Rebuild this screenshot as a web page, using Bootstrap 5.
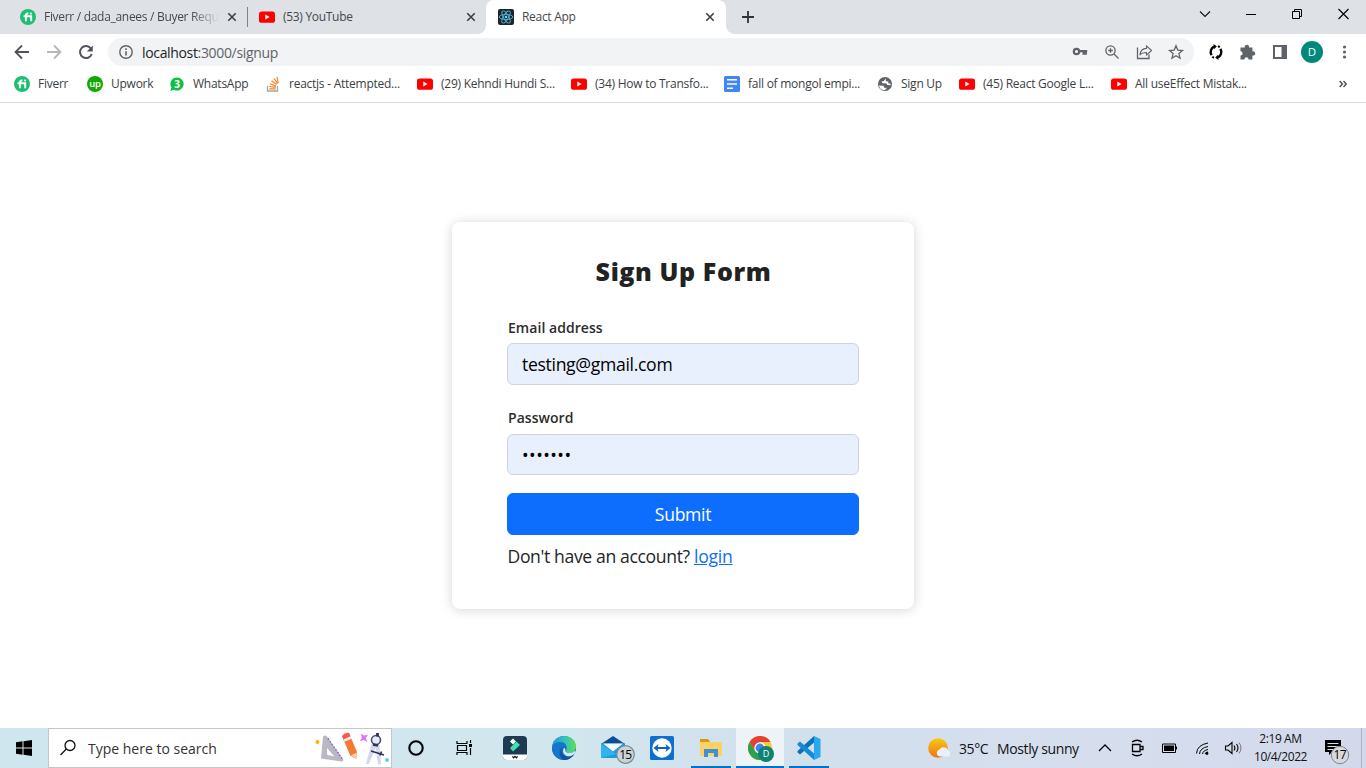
<!DOCTYPE html>
<html lang="en">
<head>
<meta charset="utf-8">
<title>React App</title>
<link rel="stylesheet" href="https://cdn.jsdelivr.net/npm/bootstrap@5.3.0/dist/css/bootstrap.min.css">
<style>
  html, body { height: 100%; }
  body { font-family: "Open Sans", "Noto Sans", sans-serif; overflow: hidden; color: #212529; background: #fff; }
  svg { display: block; flex: none; }
  svg text { font-family: "Open Sans", "Noto Sans", sans-serif; }
  .tabstrip { height: 34px; background: #dee1e6; font-size: 12px; letter-spacing: -.3px; color: #45494d; }
  .tab { height: 34px; }
  .tab-title { white-space: nowrap; }
  .tab-fade { -webkit-mask-image: linear-gradient(90deg, #000 84%, transparent); mask-image: linear-gradient(90deg, #000 84%, transparent); }
  .tab-on { background: #fff; border-radius: 8px 8px 0 0; position: relative; }
  .tab-on::before, .tab-on::after { content: ""; position: absolute; bottom: 0; width: 8px; height: 8px; }
  .tab-on::before { left: -8px; background: radial-gradient(circle at 0 0, transparent 7.5px, #fff 8px); }
  .tab-on::after { right: -8px; background: radial-gradient(circle at 100% 0, transparent 7.5px, #fff 8px); }
  .tab-rule { width: 1px; height: 20px; background: #808387; }
  .toolbar { height: 36px; }
  .omnibox { height: 28px; width: 1086px; border-radius: 14px; background: #f1f3f4; font-size: 14px; letter-spacing: -.34px; color: #5f6368; }
  .bookmarks { height: 33px; border-bottom: 1px solid #d9dadb; font-size: 12px; letter-spacing: -.25px; color: #3c4043; padding-left: 14px; }
  .bm { white-space: nowrap; gap: 8px; height: 27px; }
  .viewport { height: 625px; padding-top: 119px; }
  .signup { width: 462px; height: 387px; border-radius: 8px; padding: 33px 55px 0; background: #fff; box-shadow: 0 1px 12px rgba(0,0,0,.17); font-size: 17.6px; }
  .signup h1 { font-size: 25px; font-weight: 800; line-height: 32px; letter-spacing: .6px; margin: 0 0 32px; padding-left: 1px; color: #222; }
  .signup .form-label { font-size: 14px; font-weight: 600; line-height: 18px; letter-spacing: .05px; margin-bottom: 6px; padding-left: 1px; display: block; color: #2c2c2c; }
  .signup .form-control { height: 42px; background: #e8f0fe; border-color: #ced4da; border-radius: 6px; color: #000; font-size: 17.6px; letter-spacing: -.32px; padding: 6px 14px; }
  .signup .form-control[type=password] { height: 41px; letter-spacing: .45px; }
  .signup .btn { height: 42px; background: #0d6efd; font-size: 17.6px; letter-spacing: -.3px; border-radius: 6px; }
  .ask { letter-spacing: -.37px; padding-left: .5px; }
  .ask a { letter-spacing: -.25px; }
  .taskbar { height: 40px; background: linear-gradient(90deg, #d0e6ee 0%, #d2e6ee 42%, #d2dfec 62%, #d6deee 80%, #d3d9eb 100%); color: #111; }
  .searchbox { width: 344px; height: 40px; background: #fff; border: 1px solid #c4c7c9; font-size: 14px; color: #333; }
  .app { width: 49px; height: 40px; border-bottom: 2px solid transparent; }
  .app-open { width: 40px; margin: 0 4.5px; border-color: #0073cf; }
  .app-focus { width: 48px; margin: 0 .5px; border-color: #0073cf; background: #edf3f7; }
  .tray { font-size: 14px; letter-spacing: -.38px; white-space: nowrap; }
  .clock { width: 63px; font-size: 12px; line-height: 18px; letter-spacing: -.42px; }
</style>
<script src="https://cdn.jsdelivr.net/npm/bootstrap@5.3.0/dist/js/bootstrap.bundle.min.js"></script>
</head>
<body class="d-flex flex-column">

<svg width="0" height="0" class="position-absolute">
  <defs>
    <symbol id="yt" viewBox="0 0 16 16"><rect y="2.4" width="16" height="11.4" rx="2.6" fill="#f00"/><path d="M6.3 5.6 10.6 8.1 6.3 10.6z" fill="#fff"/></symbol>
    <symbol id="fv" viewBox="0 0 16 16"><circle cx="8" cy="8" r="8" fill="#1dbf73"/><path d="M3.600 7.200h7.600v5M5.900 12.200V6.300q0-2 2.600-1.800" fill="none" stroke="#fff" stroke-width="1.900"/><circle cx="11" cy="4.500" r="1.100" fill="#fff"/></symbol>
    <symbol id="cross" viewBox="0 0 10 10"><path d="M1.300 1.300 8.700 8.700M8.700 1.300 1.300 8.700" stroke="#3c4043" stroke-width="1.600"/></symbol>
  </defs>
</svg>

<!-- tab strip -->
<header class="tabstrip d-flex align-items-center flex-shrink-0">
  <div class="tab d-flex align-items-center" style="width:247px;padding-left:20px">
    <svg width="16" height="16"><use href="#fv"/></svg>
    <div class="tab-title tab-fade" style="width:175px;margin-left:8px">Fiverr / dada_anees / Buyer Requ</div>
    <svg width="10" height="10" style="margin-left:8px"><use href="#cross"/></svg>
  </div>
  <div class="tab-rule"></div>
  <div class="tab d-flex align-items-center" style="width:238px;padding-left:11px">
    <svg width="16" height="16"><use href="#yt"/></svg>
    <div class="tab-title" style="width:175px;margin-left:8px">(53) YouTube</div>
    <svg width="10" height="10" style="margin-left:8px"><use href="#cross"/></svg>
  </div>
  <div class="tab tab-on d-flex align-items-center" style="width:240px;padding-left:12px">
    <svg width="16" height="16" viewBox="0 0 16 16"><rect width="16" height="16" rx="2" fill="#20232a"/><g fill="none" stroke="#52b7d2" stroke-width=".9"><ellipse cx="8" cy="8" rx="6.800" ry="2.600"/><ellipse cx="8" cy="8" rx="6.800" ry="2.600" transform="rotate(60 8 8)"/><ellipse cx="8" cy="8" rx="6.800" ry="2.600" transform="rotate(120 8 8)"/></g><circle cx="8" cy="8" r="1.300" fill="#61dafb"/></svg>
    <div class="tab-title" style="width:175px;margin-left:8px">React App</div>
    <svg width="10" height="10" style="margin-left:8px"><use href="#cross"/></svg>
  </div>
  <svg width="12" height="12" viewBox="0 0 12 12" style="margin-left:16px"><path d="M6 0v12M0 6h12" stroke="#303236" stroke-width="1.800"/></svg>
  <div class="ms-auto d-flex" style="padding-bottom:6px;padding-right:17px">
    <svg width="12" height="12" viewBox="0 0 12 12" style="margin-right:35px"><path d="m1 3.500 5 5 5-5" fill="none" stroke="#111" stroke-width="1.100"/></svg>
    <svg width="10" height="12" viewBox="0 0 10 12" style="margin-right:36px"><path d="M0 6.500h10" stroke="#000"/></svg>
    <svg width="11" height="12" viewBox="0 0 11 12" style="margin-right:35px"><path d="M.5 3.500h7v7h-7zM2.500 3.500v-2h7v7h-2" fill="none" stroke="#000"/></svg>
    <svg width="11" height="12" viewBox="0 0 11 12"><path d="m.5 1 10 10M10.500 1 .5 11" stroke="#000" stroke-width="1.100"/></svg>
  </div>
</header>

<!-- toolbar -->
<div class="toolbar d-flex align-items-center flex-shrink-0">
  <svg width="108" height="36" viewBox="0 0 108 36" fill="none" stroke-width="1.800"><path d="M29 18H15.800M22 11.500 15.500 18l6.500 6.500" stroke="#50545a"/><path d="M47 18h13.200M54 11.500l6.500 6.500-6.500 6.500" stroke="#b5b8bb"/><path d="M91 14.700A6 6 0 1 0 91.700 20" stroke="#50545a" stroke-width="2"/><path d="M92.800 11.500v6h-6z" fill="#50545a"/></svg>
  <div class="omnibox d-flex align-items-center">
    <svg width="14" height="14" viewBox="0 0 14 14" style="margin:0 9px 0 11px"><circle cx="7" cy="7" r="6.200" fill="none" stroke="#5f6368" stroke-width="1.400"/><path d="M7 6.200v4.200M7 3.300v1.600" stroke="#5f6368" stroke-width="1.600"/></svg>
    <div><span class="text-dark">localhost</span>:3000/signup</div>
    <svg class="ms-auto" width="130" height="28" viewBox="0 0 130 28" fill="none" stroke="#5f6368" stroke-width="1.300">
      <circle cx="12.500" cy="13.500" r="2.700" stroke-width="2.200"/><path d="M16 13.200h7.200M19.600 13.500v3.300M21.800 13.500v3.300" stroke-width="2.200"/>
      <circle cx="46.500" cy="12.500" r="4.600"/><path d="M50 16l4.500 4.500M44.200 12.500h4.600M46.500 10.200v4.600"/>
      <path d="M73.500 9.500v11H85v-4"/><path d="M76 16.800c.5-4.500 3-6.300 6.500-6.400V7.800l5 4.700-5 4.600v-2.600c-3 0-5 .4-6.500 2.300z" stroke-linejoin="round" stroke-width="1.100"/>
      <path d="m112 7.800 1.800 4.300 4.700.4-3.600 3.100 1.100 4.600-4-2.500-4 2.500 1.100-4.600-3.600-3.100 4.700-.4z"/>
    </svg>
  </div>
  <svg width="172" height="36" viewBox="0 0 172 36">
    <path d="M20.500 12.400A6 6 0 0 0 17.600 21.200M23.500 23.600A6 6 0 0 0 26.400 14.800" fill="none" stroke="#000" stroke-width="2.400"/><path d="M19.500 10l3.300 2.300-2.600 3zM24.500 26l-3.300-2.300 2.600-3z"/><path d="M24 12.100q1 .4 1.700 1.200M20 23.900q-1-.4-1.700-1.200" stroke="#000" stroke-width="2" fill="none"/>
    <path d="M47.500 13.500h3.300a2.200 2.200 0 1 1 4.200 0h3.400v3.800a2.200 2.200 0 1 1 0 4.200v3.900h-3.800a2.100 2.100 0 0 0-4.200 0h-3.900v-3.900a2.100 2.100 0 0 0 0-4.200v-3.800z" fill="#5f6368"/>
    <path d="M79 11h14v14H79zm2 2v10h6.500V13z" fill="#5f6368" fill-rule="evenodd"/>
    <circle cx="118" cy="18" r="11" fill="#00897b"/><text x="118" y="22" font-size="11.500" fill="#fff" text-anchor="middle">D</text>
    <g fill="#5f6368"><circle cx="150.500" cy="13" r="1.600"/><circle cx="150.500" cy="18" r="1.600"/><circle cx="150.500" cy="23" r="1.600"/></g>
  </svg>
</div>

<!-- bookmarks bar -->
<nav class="bookmarks d-flex flex-shrink-0">
  <div class="bm d-flex align-items-center" style="width:73px"><svg width="16" height="16"><use href="#fv"/></svg>Fiverr</div>
  <div class="bm d-flex align-items-center" style="width:82px"><svg width="16" height="16" viewBox="0 0 16 16"><circle cx="8" cy="8" r="8" fill="#14a800"/><text x="8" y="10.800" font-size="9.500" font-weight="600" fill="#fff" text-anchor="middle" letter-spacing="-.2">up</text></svg>Upwork</div>
  <div class="bm d-flex align-items-center" style="width:96px"><svg width="16" height="16" viewBox="0 0 16 16"><path d="M8 1.500a6.500 6.500 0 1 1-3 12.200L1.300 15l1.100-3.600A6.500 6.500 0 0 1 8 1.500z" fill="#10c042"/><text x="8" y="11.600" font-size="10" font-weight="700" fill="#fff" text-anchor="middle">3</text></svg>WhatsApp</div>
  <div class="bm d-flex align-items-center" style="width:152px"><svg width="16" height="16" viewBox="0 0 16 16" fill="none"><path d="M2.500 10v5h10v-5" stroke="#a3a5a7" stroke-width="1.300"/><path d="M4.300 12.800h6.400M4.300 10.500l6.400.9M5 7.700l6 2.400M6.500 4.800l5.200 3.800M9 2.300l3.700 5.200M12 1l1.200 6" stroke="#f48024" stroke-width="1.200"/></svg>reactjs - Attempted...</div>
  <div class="bm d-flex align-items-center" style="width:154px"><svg width="16" height="16"><use href="#yt"/></svg>(29) Kehndi Hundi S...</div>
  <div class="bm d-flex align-items-center" style="width:153px"><svg width="16" height="16"><use href="#yt"/></svg>(34) How to Transfo...</div>
  <div class="bm d-flex align-items-center" style="width:153px"><svg width="16" height="16" viewBox="0 0 16 16"><rect width="16" height="16" rx="1.500" fill="#4285f4"/><path d="M3 3.700h10M3 8h10M3 12.300h6" stroke="#fff" stroke-width="1.600"/></svg>fall of mongol empi...</div>
  <div class="bm d-flex align-items-center" style="width:82px"><svg width="16" height="16" viewBox="0 0 16 16"><circle cx="8" cy="8" r="7" fill="#5f6368"/><path d="M2 9.500 6.500 9.700 7.500 12 10 11.800 8 14H6Q2.500 13 2 9.500zM8.500 2.500 7 5 4.500 5.500l1 1.700 4 .3.800 1.500 3 .2.500-1.500-2.500-.5V5.500l-2.300-.3z" fill="#fff"/></svg>Sign Up</div>
  <div class="bm d-flex align-items-center" style="width:152px"><svg width="16" height="16"><use href="#yt"/></svg>(45) React Google L...</div>
  <div class="bm d-flex align-items-center"><svg width="16" height="16"><use href="#yt"/></svg>All useEffect Mistak...</div>
  <svg class="ms-auto" width="8" height="27" viewBox="0 0 8 27" style="margin-right:19px" fill="none" stroke="#50545a" stroke-width="1.500"><path d="M.7 11 3.400 14 .7 17M4.500 11l2.700 3-2.700 3"/></svg>
</nav>

<!-- page -->
<main class="viewport flex-shrink-0">
  <form class="signup mx-auto">
    <h1 class="text-center">Sign Up Form</h1>
    <label class="form-label" for="mail">Email address</label>
    <input class="form-control" id="mail" type="text" value="testing@gmail.com">
    <label class="form-label" for="pw" style="margin-top:24px;margin-bottom:7px">Password</label>
    <input class="form-control" id="pw" type="password" value="1234567">
    <button type="button" class="btn btn-primary w-100 p-0" style="margin-top:18px">Submit</button>
    <p class="ask mb-0" style="margin-top:8px">Don't have an account? <a href="#">login</a></p>
  </form>
</main>

<!-- taskbar -->
<footer class="taskbar d-flex flex-shrink-0">
  <div class="d-flex align-items-center justify-content-center" style="width:48px">
    <svg width="16" height="16" viewBox="0 0 16 16"><path d="M0 2.200 6.500 1.300v6.200H0zM7.500 1.200 16 0v7.500H7.500zM0 8.500h6.500v6.200L0 13.800zM7.500 8.500H16V16l-8.500-1.200z"/></svg>
  </div>
  <div class="searchbox d-flex align-items-center">
    <svg width="18" height="18" viewBox="0 0 18 18" style="margin:0 11px 0 10px" fill="none" stroke="#111" stroke-width="1.300"><circle cx="11" cy="6.500" r="5"/><path d="M7.300 10 1.500 16"/></svg>
    <div>Type here to search</div>
    <svg class="ms-auto" width="76" height="38" viewBox="0 0 76 38">
      <circle cx="2.500" cy="13" r="2" fill="#ffb000"/>
      <path d="M8 7.500q2-2 4 0L28.500 30.500q0 2-2 2L6 29.500zM12 19l.2 7 7 1.300z" fill="#b9b9c6" fill-rule="evenodd"/><path d="M13 9.500 27 29.500" stroke="#8a62d8" stroke-width="1.500" stroke-dasharray="1.500 1.800"/>
      <path d="m27 7 7-3 8 19-.8 7-6-3.500z" fill="#f47a35"/><path d="m27 7q3-4 7-3l1.500 3.300-7 3.300z" fill="#fa5a4c"/><path d="m28.500 10.600 7-3.300 1 2.400-7 3z" fill="#ece9f5"/><path d="m36 26.300 6-2.800-.7 6.500z" fill="#f9cfa4"/>
      <path d="m46 4.500 3 2 4-.7-2.200 3.200 1.500 4-3.500-2-4 1.300 2-3.500z" fill="#e074f5"/>
      <path d="m57 15-5.500 19.500 2 .2L61 17zM61 17l2.500 18 2-.2L64 16z" fill="#d4d7ef" stroke="#d4d7ef"/><circle cx="61" cy="11" r="4.500" fill="#e9ebf8" stroke="#4a4f78" stroke-width="1.600"/><path d="M62.500 4v3.500M58 15.500l5 1" stroke="#2c3157" stroke-width="2.800"/><path d="m56 22 13 4M65 26.500l1.500-4" stroke="#2c3157" stroke-width="1.700"/><circle cx="72" cy="31" r="2" fill="#62d4df"/>
    </svg>
  </div>
  <div class="app d-flex align-items-center justify-content-center" style="width:48px"><svg width="16" height="16" viewBox="0 0 16 16" style="margin-top:2px"><circle cx="8" cy="8" r="6.700" fill="none" stroke="#000" stroke-width="2.100"/></svg></div>
  <div class="app d-flex align-items-center justify-content-center"><svg width="17" height="16" viewBox="0 0 17 16" style="margin-top:1px" fill="none" stroke="#000" stroke-width="1.200"><path d="M1 1v2.500h10V1M1 15v-2.500h10V15M1.500 5.500h9v5h-9zM14.500 0v3M14.500 8v7"/><path d="M13 4h3v3h-3z" fill="#000" stroke="none"/></svg></div>
  <div class="app d-flex align-items-center justify-content-center"><svg width="24" height="24" viewBox="0 0 24 24" style="margin-left:3px;margin-top:2px"><rect width="24" height="24" rx="4" fill="#1c3a50"/><path d="M0 18.500h24V20a4 4 0 0 1-4 4H4a4 4 0 0 1-4-4z" fill="#fff"/><path d="m7 5.500 3-3 3 3-3 3z" fill="#fff"/><path d="m7 12 6.500-6.500L17 9l-7 6.500z" fill="#3ee0b5"/><path d="m9.500 20.300 1 1.600 1.500-1.500 1.500 1.500 1-1.600" fill="none" stroke="#111" stroke-width="1.200"/></svg></div>
  <div class="app d-flex align-items-center justify-content-center"><svg width="24" height="24" viewBox="0 0 24 24" style="margin-left:2px;margin-top:2px">
    <defs><linearGradient id="eg" x1="0" x2="1"><stop offset="0" stop-color="#2098d8"/><stop offset=".55" stop-color="#36c2bd"/><stop offset="1" stop-color="#62df50"/></linearGradient></defs>
    <circle cx="12" cy="12" r="12" fill="#1468b8"/><path d="M0 11C1 4 6 0 12 0c7 0 12 5 12 10.500 0 4-3 6.500-6.500 6.500-3 0-4.500-1.500-3.500-3 2-3-1-5.500-5-5.500S1 9 0 13z" fill="url(#eg)"/><path d="M0 12C1 7.500 5 5.500 9 6c4 .5 6 3 5.500 6-1-2-4-2.500-5.500 0-2 4 1 9 6 9.500-2 2-4 2.500-6 2C4 22 0 18 0 12z" fill="#1676cc"/><path d="M13.500 14c-.8 1.500 1 3 4 3 2 0 4-1 5-2l1 .8c.5 1-2 3.500-4.500 4.300-5 1.500-8-2-8-5 0-1 .5-2.500 1.500-3.500z" fill="#d3e7ee"/><path d="M9 12.500c-1 5 2.500 8.500 7.500 8.300 2.500-.1 4.500-1.500 5.500-2.700-2 3.500-5.500 6-10 6-4.500-2-5.500-8-3-11.600z" fill="#10549f"/></svg></div>
  <div class="app d-flex align-items-center justify-content-center" style="width:50px"><svg width="36" height="30" viewBox="0 0 36 30" style="margin-left:13px;margin-top:4px"><path d="M0 10 12 2l12 8z" fill="#0a4e98"/><path d="M0 9.500h24V24H0z" fill="#1e9bdc"/><path d="M2 9.500h20l-10 8z" fill="#f4fafe"/><path d="M0 24V10l15 10z" fill="#32b3ea"/><circle cx="24.500" cy="20.500" r="8.800" fill="#c9d3d9" stroke="#7f898e" stroke-width="1.200"/><text x="24.300" y="25" font-size="12" fill="#000" text-anchor="middle" letter-spacing="-.7">15</text></svg></div>
  <div class="app d-flex align-items-center justify-content-center"><svg width="24" height="24" viewBox="0 0 24 24" style="margin-top:2px"><rect width="24" height="24" rx="1.500" fill="#0e6fd3"/><circle cx="12" cy="12" r="9.700" fill="#fff"/><path d="m3.500 12 5-4-.8 3h8.600l-.8-3 5 4-5 4 .8-3H7.700l.8 3z" fill="#0e62c4"/></svg></div>
  <div class="app app-open d-flex align-items-center justify-content-center"><svg width="22" height="20" viewBox="0 0 22 20" style="margin-top:2px"><path d="M0 1h8l2 2.500v3H0z" fill="#d99a0b"/><path d="M0 4h22v14H0z" fill="#fdd265"/><path d="M4 19v-8h14v8h-4v-4H8v4z" fill="#3f90d4"/></svg></div>
  <div class="app app-focus d-flex align-items-center justify-content-center"><svg width="26" height="26" viewBox="0 0 26 26" style="margin-left:2px;margin-top:3px"><circle cx="12" cy="12" r="12" fill="#fcc934"/><path d="M1.600 6A12 12 0 0 1 22.400 6H12L7 15z" fill="#e34133"/><path d="M1.600 6A12 12 0 0 0 12 24l5-9H7z" fill="#2da14c"/><circle cx="12" cy="12" r="5.700" fill="#fff"/><circle cx="12" cy="12" r="4.400" fill="#4285f4"/><circle cx="18" cy="18" r="8" fill="#0c8473"/><text x="18" y="21.200" font-size="9" fill="#fff" text-anchor="middle">D</text></svg></div>
  <div class="app app-open d-flex align-items-center justify-content-center"><svg width="24" height="24" viewBox="0 0 24 24" style="margin-top:2px"><path d="M17 0 23.500 3v18L17 24z" fill="#29a8ee"/><path d="M17 0v6.500L3 18.500.5 16.500v-1.500L16 1z" fill="#0a72ba"/><path d="M17 24v-6.500L3 5.500.5 7.500V9L16 23z" fill="#1689d2"/></svg></div>

  <div class="tray ms-auto d-flex align-items-center">
    <svg width="22" height="22" viewBox="0 0 22 22" style="margin-right:9px"><defs><linearGradient id="sun" x2="0" y2="1"><stop stop-color="#fcc812"/><stop offset="1" stop-color="#ee7412"/></linearGradient></defs><circle cx="10" cy="11" r="9.800" fill="url(#sun)"/><path d="M12 19.500a3.500 3.500 0 0 1-.5-6.900 4.800 4.800 0 0 1 8.700 1 3 3 0 0 1-.7 5.900z" fill="#e9f0fa"/></svg>
    <div style="width:38px">35°C</div>
    <div style="width:96px">Mostly sunny</div>
    <svg width="156" height="40" viewBox="0 0 156 40" fill="none" stroke="#000" stroke-width="1.300">
      <path d="m6 23 6-6 6 6"/>
      <path d="M39.500 16.500h7.500v7h-7.500zM47 18.500h3v3h-3M39 14q5-3.500 10 0M39 26q5 3.500 10 0"/>
      <path d="M69.500 16h13v8.500h-13zM83.500 18.500v3" stroke-width="1"/><path d="M71 17.500h10V23H71z" fill="#000" stroke="none"/>
      <path d="M103.500 25.500Q104 17 115 15M106.500 26Q107 20 115 18.500M109.500 26Q110 22.500 115 21.500M112 26q.5-2 3-2" stroke-width="1"/><circle cx="114" cy="25.500" r="1.400" fill="#000" stroke="none"/>
      <path d="M132.500 18h2.500l4-3.500v11L135 22h-2.500zM141 17.500q1.800 2.500 0 5M143.500 16q3 4 0 8" stroke-width="1.100"/><path d="M146 14.500q4 5.500 0 11" stroke="#777" stroke-width="1"/>
    </svg>
    <div class="clock text-center"><div>2:19 AM</div><div>10/4/2022</div></div>
    <svg width="49" height="40" viewBox="0 0 49 40"><path d="M13 12h16v12H20l-3 3v-3h-4z"/><path d="M15.500 15.500h11M15.500 18.500h11M15.500 21.500h8" stroke="#d5dcec" stroke-width="1"/><circle cx="28" cy="27" r="8.700" fill="#d9d9dc" stroke="#828589"/><text x="27.700" y="31.400" font-size="12" fill="#000" text-anchor="middle" letter-spacing="-.7">17</text></svg>
    <div style="width:5px;height:40px;border-left:1px solid #aeb4c2"></div>
  </div>
</footer>
</body>
</html>
